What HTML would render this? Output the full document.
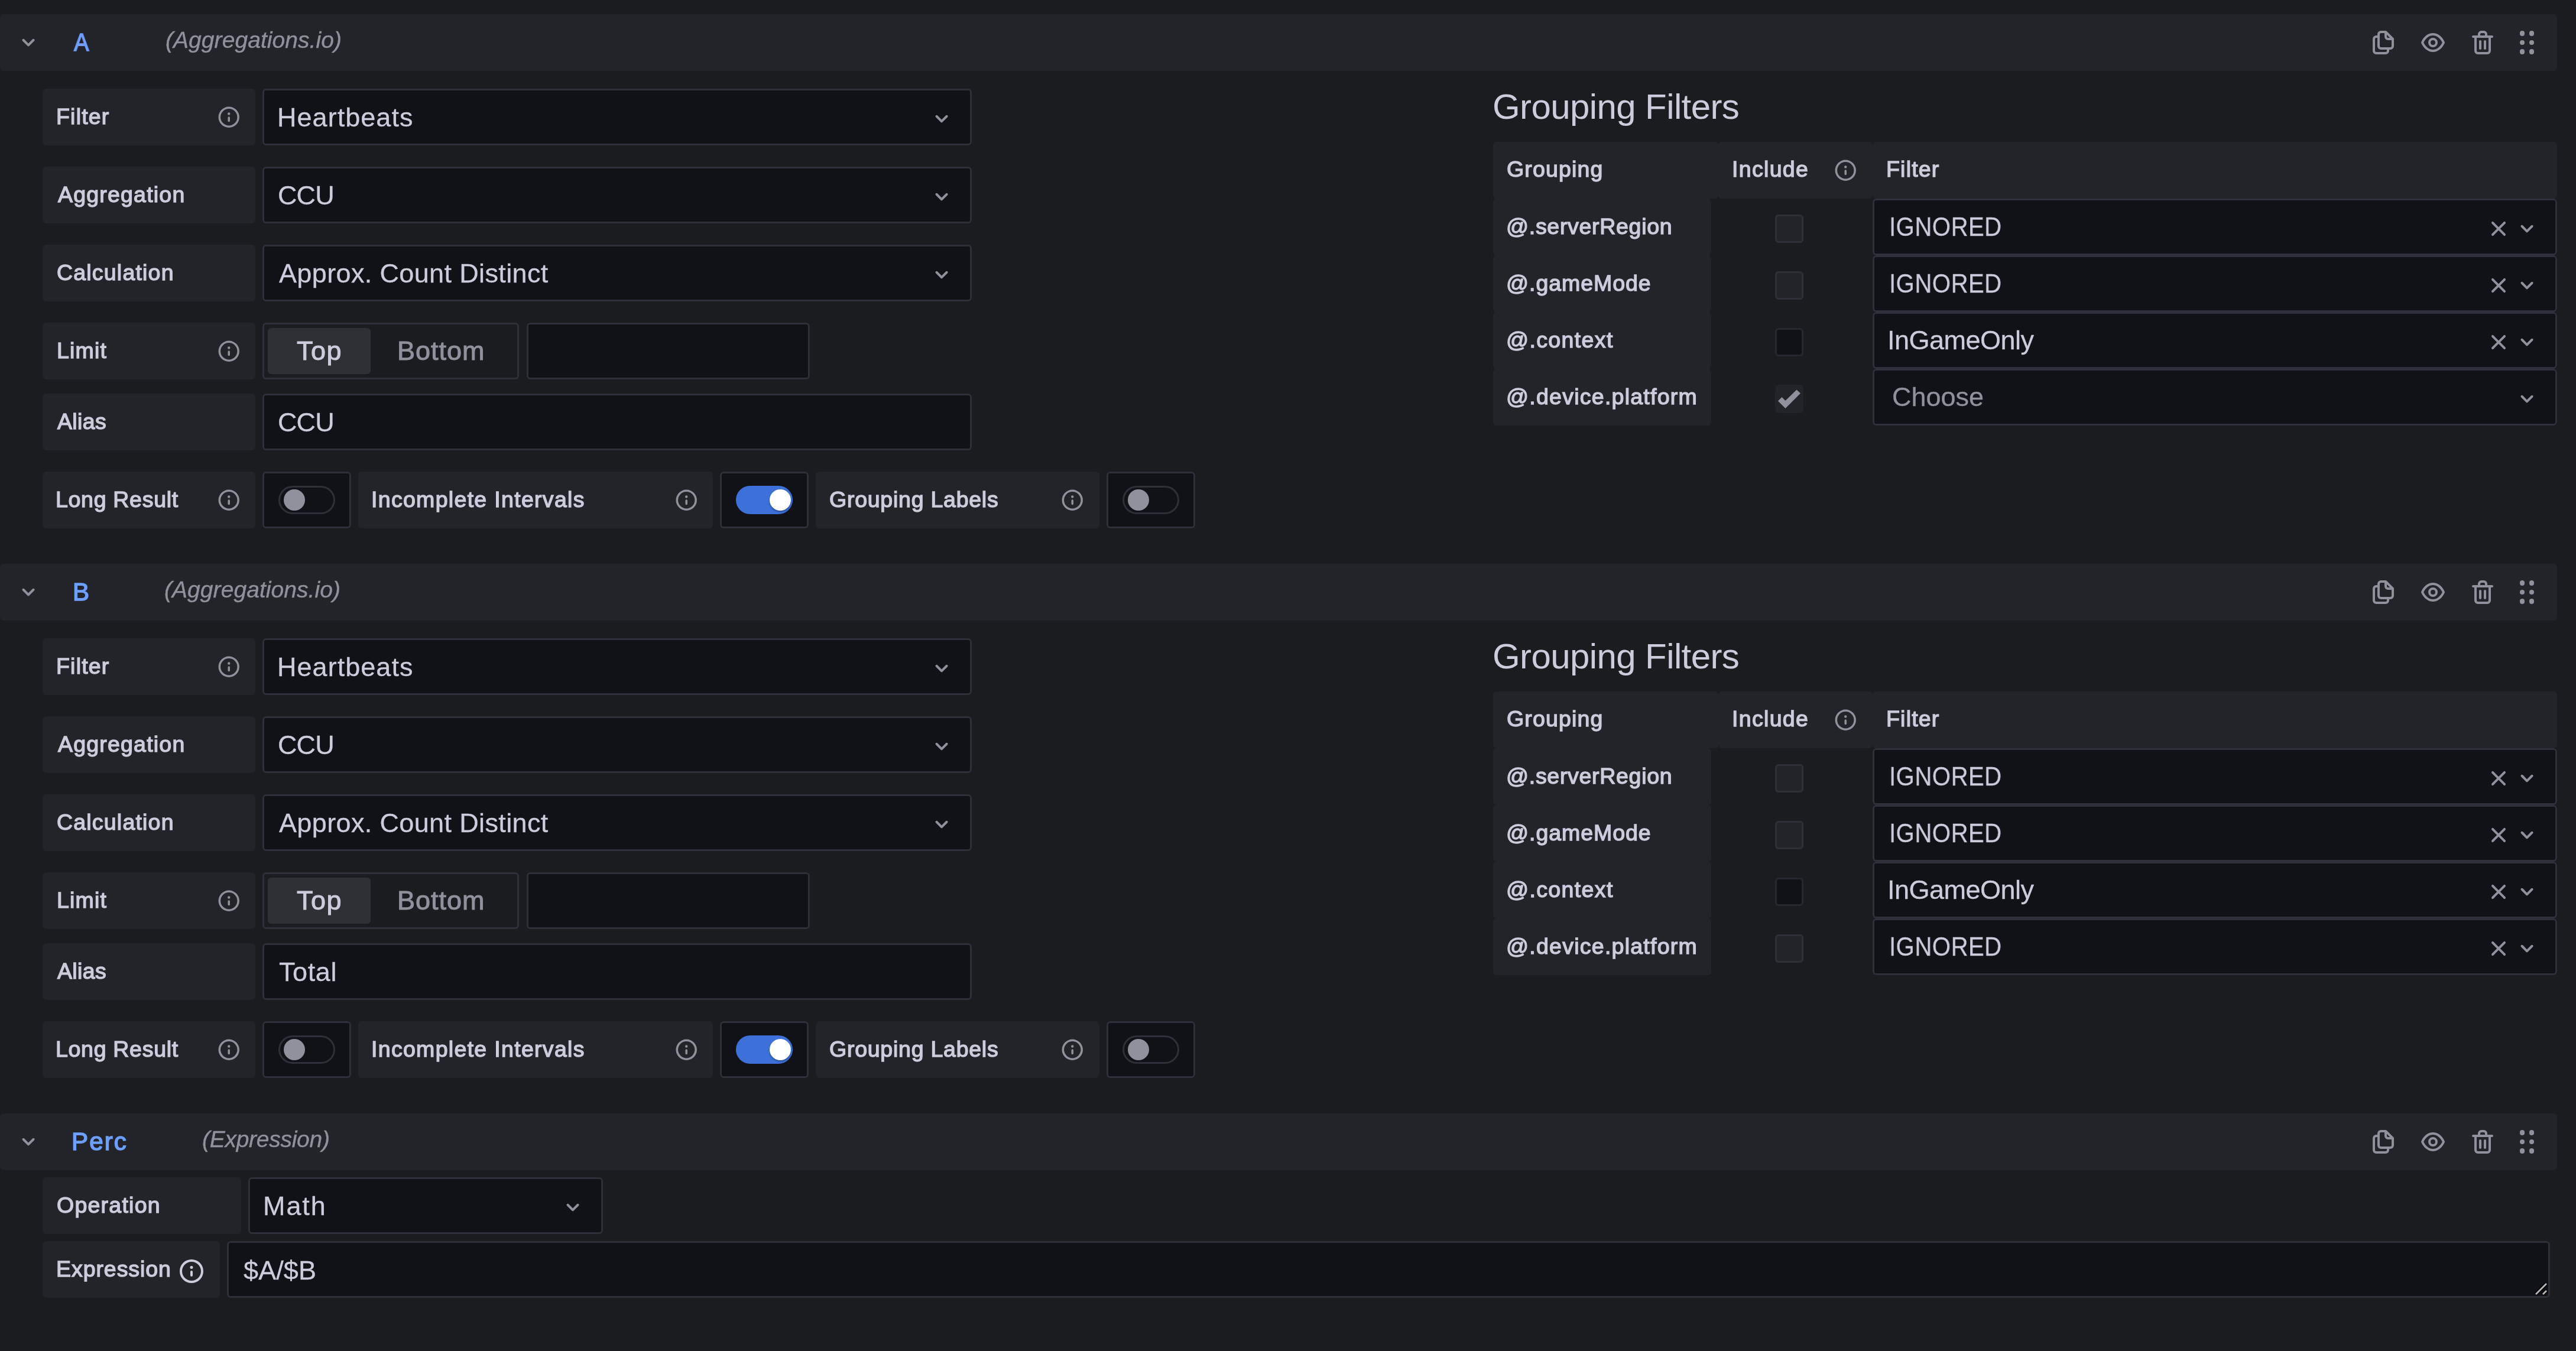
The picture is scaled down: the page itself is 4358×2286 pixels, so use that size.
<!DOCTYPE html>
<html><head><meta charset="utf-8"><title>Query editor</title>
<style>
html,body{margin:0;padding:0;}
body{width:4358px;height:2286px;background:#1b1c20;position:relative;overflow:hidden;font-family:"Liberation Sans",sans-serif;}
.a{position:absolute;}
.t{position:absolute;white-space:nowrap;will-change:transform;}
svg.a{overflow:visible}
</style></head><body>
<div class="a" style="left:0px;top:24px;width:4326px;height:96px;background:#23242a;border-radius:6px;"></div>
<svg class="a" style="left:24.00px;top:47.70px" width="48" height="48" viewBox="0 0 24 24"><path fill="#91919d" d="M17,9.17a1,1,0,0,0-1.41,0L12,12.71,8.46,9.17a1,1,0,0,0-1.41,0,1,1,0,0,0,0,1.42l4.24,4.24a1,1,0,0,0,1.42,0L17,10.59A1,1,0,0,0,17,9.17Z"/></svg>
<div class="t" style="left:124.5px;top:50.95px;font-size:42px;line-height:42px;color:#6e9fff;-webkit-text-stroke:1.5px #6e9fff;transform:scaleX(0.91);transform-origin:0 0;">A</div>
<div class="t" style="left:279.8px;top:47.69px;font-size:39px;line-height:39px;color:#91919d;font-style:italic;letter-spacing:0.06px;-webkit-text-stroke:0.4px #91919d;">(Aggregations.io)</div>
<svg class="a" style="left:4008.00px;top:48.00px" width="48" height="48" viewBox="0 0 24 24"><path fill="#91919d" d="M21,8.94a1.31,1.31,0,0,0-.06-.27l0-.09a1.07,1.07,0,0,0-.19-.28h0l-6-6h0a1.07,1.07,0,0,0-.28-.19.32.32,0,0,0-.09,0A.88.88,0,0,0,14.05,2H10A3,3,0,0,0,7,5V6H6A3,3,0,0,0,3,9V19a3,3,0,0,0,3,3h8a3,3,0,0,0,3-3V18h1a3,3,0,0,0,3-3V9S21,9,21,8.94ZM15,5.41,17.59,8H16a1,1,0,0,1-1-1ZM15,19a1,1,0,0,1-1,1H6a1,1,0,0,1-1-1V9A1,1,0,0,1,6,8H7v7a3,3,0,0,0,3,3h5Zm4-4a1,1,0,0,1-1,1H10a1,1,0,0,1-1-1V5a1,1,0,0,1,1-1h3V7a3,3,0,0,0,3,3h3Z"/></svg>
<svg class="a" style="left:4092.00px;top:48.00px" width="48" height="48" viewBox="0 0 24 24"><path fill="#91919d" d="M21.92,11.6C19.9,6.91,16.1,4,12,4S4.1,6.91,2.08,11.6a1,1,0,0,0,0,.8C4.1,17.09,7.9,20,12,20s7.9-2.91,9.92-7.6A1,1,0,0,0,21.92,11.6ZM12,18c-3.17,0-6.17-2.29-7.9-6C5.830,8.29,8.83,6,12,6s6.17,2.29,7.9,6C18.17,15.71,15.17,18,12,18ZM12,8a4,4,0,1,0,4,4A4,4,0,0,0,12,8Zm0,6a2,2,0,1,1,2-2A2,2,0,0,1,12,14Z"/></svg>
<svg class="a" style="left:4176.00px;top:48.00px" width="48" height="48" viewBox="0 0 24 24"><path fill="#91919d" d="M10,18a1,1,0,0,0,1-1V11a1,1,0,0,0-2,0v6A1,1,0,0,0,10,18ZM20,6H16V5a3,3,0,0,0-3-3H11A3,3,0,0,0,8,5V6H4A1,1,0,0,0,4,8H5V19a3,3,0,0,0,3,3h8a3,3,0,0,0,3-3V8h1a1,1,0,0,0,0-2ZM10,5a1,1,0,0,1,1-1h2a1,1,0,0,1,1,1V6H10Zm7,14a1,1,0,0,1-1,1H8a1,1,0,0,1-1-1V8H17Zm-3-1a1,1,0,0,0,1-1V11a1,1,0,0,0-2,0v6A1,1,0,0,0,14,18Z"/></svg>
<div class="a" style="left:4262.7px;top:52.2px;width:8.6px;height:8.6px;border-radius:50%;background:#91919d"></div>
<div class="a" style="left:4262.7px;top:67.7px;width:8.6px;height:8.6px;border-radius:50%;background:#91919d"></div>
<div class="a" style="left:4262.7px;top:83.2px;width:8.6px;height:8.6px;border-radius:50%;background:#91919d"></div>
<div class="a" style="left:4278.7px;top:52.2px;width:8.6px;height:8.6px;border-radius:50%;background:#91919d"></div>
<div class="a" style="left:4278.7px;top:67.7px;width:8.6px;height:8.6px;border-radius:50%;background:#91919d"></div>
<div class="a" style="left:4278.7px;top:83.2px;width:8.6px;height:8.6px;border-radius:50%;background:#91919d"></div>
<div class="a" style="left:72px;top:150px;width:360px;height:96px;background:#23242a;border-radius:6px;"></div>
<div class="t" style="left:95.4px;top:178.76px;font-size:37.5px;line-height:37.5px;color:#ccccdc;letter-spacing:1.2px;-webkit-text-stroke:1.4px #ccccdc;">Filter</div>
<svg class="a" style="left:365.75px;top:176.75px" width="42.5" height="42.5" viewBox="0 0 24 24"><path fill="#91919d" d="M12,2A10,10,0,1,0,22,12,10,10,0,0,0,12,2Zm0,18a8,8,0,1,1,8-8A8,8,0,0,1,12,20Zm0-8.5a1,1,0,0,0-1,1v3a1,1,0,0,0,2,0v-3A1,1,0,0,0,12,11.5Zm0-4a1.25,1.25,0,1,0,1.25,1.25A1.25,1.25,0,0,0,12,7.5Z"/></svg>
<div class="a" style="left:444px;top:150px;width:1200px;height:96px;background:#111217;box-shadow:inset 0 0 0 3px #2e2f38;border-radius:6px;"></div>
<div class="t" style="left:469px;top:176.21px;font-size:45px;line-height:45px;color:#ccccdc;letter-spacing:1.04px;-webkit-text-stroke:0.3px #ccccdc;">Heartbeats</div>
<svg class="a" style="left:1569.00px;top:176.70px" width="48" height="48" viewBox="0 0 24 24"><path fill="#91919d" d="M17,9.17a1,1,0,0,0-1.41,0L12,12.71,8.46,9.17a1,1,0,0,0-1.41,0,1,1,0,0,0,0,1.42l4.24,4.24a1,1,0,0,0,1.42,0L17,10.59A1,1,0,0,0,17,9.17Z"/></svg>
<div class="a" style="left:72px;top:282px;width:360px;height:96px;background:#23242a;border-radius:6px;"></div>
<div class="t" style="left:97.6px;top:310.76px;font-size:37.5px;line-height:37.5px;color:#ccccdc;letter-spacing:1.2px;-webkit-text-stroke:1.4px #ccccdc;">Aggregation</div>
<div class="a" style="left:444px;top:282px;width:1200px;height:96px;background:#111217;box-shadow:inset 0 0 0 3px #2e2f38;border-radius:6px;"></div>
<div class="t" style="left:470px;top:308.21px;font-size:45px;line-height:45px;color:#ccccdc;letter-spacing:-0.9px;-webkit-text-stroke:0.3px #ccccdc;">CCU</div>
<svg class="a" style="left:1569.00px;top:308.70px" width="48" height="48" viewBox="0 0 24 24"><path fill="#91919d" d="M17,9.17a1,1,0,0,0-1.41,0L12,12.71,8.46,9.17a1,1,0,0,0-1.41,0,1,1,0,0,0,0,1.42l4.24,4.24a1,1,0,0,0,1.42,0L17,10.59A1,1,0,0,0,17,9.17Z"/></svg>
<div class="a" style="left:72px;top:414px;width:360px;height:96px;background:#23242a;border-radius:6px;"></div>
<div class="t" style="left:95.6px;top:442.76px;font-size:37.5px;line-height:37.5px;color:#ccccdc;letter-spacing:1.2px;-webkit-text-stroke:1.4px #ccccdc;">Calculation</div>
<div class="a" style="left:444px;top:414px;width:1200px;height:96px;background:#111217;box-shadow:inset 0 0 0 3px #2e2f38;border-radius:6px;"></div>
<div class="t" style="left:472px;top:440.21px;font-size:45px;line-height:45px;color:#ccccdc;letter-spacing:0.36px;-webkit-text-stroke:0.3px #ccccdc;">Approx. Count Distinct</div>
<svg class="a" style="left:1569.00px;top:440.70px" width="48" height="48" viewBox="0 0 24 24"><path fill="#91919d" d="M17,9.17a1,1,0,0,0-1.41,0L12,12.71,8.46,9.17a1,1,0,0,0-1.41,0,1,1,0,0,0,0,1.42l4.24,4.24a1,1,0,0,0,1.42,0L17,10.59A1,1,0,0,0,17,9.17Z"/></svg>
<div class="a" style="left:72px;top:546px;width:360px;height:96px;background:#23242a;border-radius:6px;"></div>
<div class="t" style="left:95.6px;top:574.76px;font-size:37.5px;line-height:37.5px;color:#ccccdc;letter-spacing:1.2px;-webkit-text-stroke:1.4px #ccccdc;">Limit</div>
<svg class="a" style="left:365.75px;top:572.75px" width="42.5" height="42.5" viewBox="0 0 24 24"><path fill="#91919d" d="M12,2A10,10,0,1,0,22,12,10,10,0,0,0,12,2Zm0,18a8,8,0,1,1,8-8A8,8,0,0,1,12,20Zm0-8.5a1,1,0,0,0-1,1v3a1,1,0,0,0,2,0v-3A1,1,0,0,0,12,11.5Zm0-4a1.25,1.25,0,1,0,1.25,1.25A1.25,1.25,0,0,0,12,7.5Z"/></svg>
<div class="a" style="left:444px;top:546px;width:434px;height:96px;box-shadow:inset 0 0 0 3px #2e2f38;border-radius:6px;"></div>
<div class="a" style="left:453px;top:555px;width:174px;height:78px;background:#2f3036;border-radius:6px;"></div>
<div class="t" style="left:502px;top:571.11px;font-size:45px;line-height:45px;color:#ccccdc;letter-spacing:1.5px;-webkit-text-stroke:1.0px #ccccdc;">Top</div>
<div class="t" style="left:672.2px;top:571.11px;font-size:45px;line-height:45px;color:#91919d;letter-spacing:1.0px;-webkit-text-stroke:1.0px #91919d;">Bottom</div>
<div class="a" style="left:891px;top:546px;width:479px;height:96px;background:#111217;box-shadow:inset 0 0 0 3px #2e2f38;border-radius:6px;"></div>
<div class="a" style="left:72px;top:666px;width:360px;height:96px;background:#23242a;border-radius:6px;"></div>
<div class="t" style="left:97.4px;top:694.76px;font-size:37.5px;line-height:37.5px;color:#ccccdc;letter-spacing:0.34px;-webkit-text-stroke:1.4px #ccccdc;">Alias</div>
<div class="a" style="left:444px;top:666px;width:1200px;height:96px;background:#111217;box-shadow:inset 0 0 0 3px #2e2f38;border-radius:6px;"></div>
<div class="t" style="left:470px;top:692.21px;font-size:45px;line-height:45px;color:#ccccdc;letter-spacing:-0.9px;-webkit-text-stroke:0.3px #ccccdc;">CCU</div>
<div class="a" style="left:72px;top:798px;width:360px;height:96px;background:#23242a;border-radius:6px;"></div>
<div class="t" style="left:94.0px;top:826.76px;font-size:37.5px;line-height:37.5px;color:#ccccdc;letter-spacing:0.7px;-webkit-text-stroke:1.4px #ccccdc;">Long Result</div>
<svg class="a" style="left:365.75px;top:824.75px" width="42.5" height="42.5" viewBox="0 0 24 24"><path fill="#91919d" d="M12,2A10,10,0,1,0,22,12,10,10,0,0,0,12,2Zm0,18a8,8,0,1,1,8-8A8,8,0,0,1,12,20Zm0-8.5a1,1,0,0,0-1,1v3a1,1,0,0,0,2,0v-3A1,1,0,0,0,12,11.5Zm0-4a1.25,1.25,0,1,0,1.25,1.25A1.25,1.25,0,0,0,12,7.5Z"/></svg>
<div class="a" style="left:444px;top:798px;width:150px;height:96px;background:#111217;box-shadow:inset 0 0 0 3px #2e2f38;border-radius:6px;"></div>
<div class="a" style="left:471px;top:822px;width:96px;height:48px;border-radius:24px;box-shadow:inset 0 0 0 3px #2e2f38"></div>
<div class="a" style="left:480px;top:828px;width:36px;height:36px;border-radius:50%;background:#91919d"></div>
<div class="a" style="left:606px;top:798px;width:600px;height:96px;background:#23242a;border-radius:6px;"></div>
<div class="t" style="left:627.6px;top:826.76px;font-size:37.5px;line-height:37.5px;color:#ccccdc;letter-spacing:1.31px;-webkit-text-stroke:1.4px #ccccdc;">Incomplete Intervals</div>
<svg class="a" style="left:1139.75px;top:824.75px" width="42.5" height="42.5" viewBox="0 0 24 24"><path fill="#91919d" d="M12,2A10,10,0,1,0,22,12,10,10,0,0,0,12,2Zm0,18a8,8,0,1,1,8-8A8,8,0,0,1,12,20Zm0-8.5a1,1,0,0,0-1,1v3a1,1,0,0,0,2,0v-3A1,1,0,0,0,12,11.5Zm0-4a1.25,1.25,0,1,0,1.25,1.25A1.25,1.25,0,0,0,12,7.5Z"/></svg>
<div class="a" style="left:1218px;top:798px;width:150px;height:96px;background:#111217;box-shadow:inset 0 0 0 3px #2e2f38;border-radius:6px;"></div>
<div class="a" style="left:1245px;top:822px;width:96px;height:48px;border-radius:24px;background:#3d71d9"></div>
<div class="a" style="left:1302px;top:828px;width:36px;height:36px;border-radius:50%;background:#fff;box-shadow:0 2px 3px rgba(0,0,0,0.35)"></div>
<div class="a" style="left:1380px;top:798px;width:480px;height:96px;background:#23242a;border-radius:6px;"></div>
<div class="t" style="left:1403.4px;top:826.76px;font-size:37.5px;line-height:37.5px;color:#ccccdc;letter-spacing:0.75px;-webkit-text-stroke:1.4px #ccccdc;">Grouping Labels</div>
<svg class="a" style="left:1793.25px;top:824.75px" width="42.5" height="42.5" viewBox="0 0 24 24"><path fill="#91919d" d="M12,2A10,10,0,1,0,22,12,10,10,0,0,0,12,2Zm0,18a8,8,0,1,1,8-8A8,8,0,0,1,12,20Zm0-8.5a1,1,0,0,0-1,1v3a1,1,0,0,0,2,0v-3A1,1,0,0,0,12,11.5Zm0-4a1.25,1.25,0,1,0,1.25,1.25A1.25,1.25,0,0,0,12,7.5Z"/></svg>
<div class="a" style="left:1872px;top:798px;width:150px;height:96px;background:#111217;box-shadow:inset 0 0 0 3px #2e2f38;border-radius:6px;"></div>
<div class="a" style="left:1899px;top:822px;width:96px;height:48px;border-radius:24px;box-shadow:inset 0 0 0 3px #2e2f38"></div>
<div class="a" style="left:1908px;top:828px;width:36px;height:36px;border-radius:50%;background:#91919d"></div>
<div class="t" style="left:2524.6px;top:151.21px;font-size:60px;line-height:60px;color:#ccccdc;letter-spacing:-0.6px;">Grouping Filters</div>
<div class="a" style="left:2526px;top:240px;width:381px;height:96px;background:#23242a;border-radius:6px;"></div>
<div class="a" style="left:2907px;top:240px;width:261px;height:96px;background:#23242a;border-radius:6px;"></div>
<div class="a" style="left:3168px;top:240px;width:1158px;height:96px;background:#23242a;border-radius:6px;"></div>
<div class="t" style="left:2549.2px;top:268.26px;font-size:37.5px;line-height:37.5px;color:#ccccdc;letter-spacing:1.17px;-webkit-text-stroke:1.4px #ccccdc;">Grouping</div>
<div class="t" style="left:2930.2px;top:268.26px;font-size:37.5px;line-height:37.5px;color:#ccccdc;letter-spacing:1.32px;-webkit-text-stroke:1.4px #ccccdc;">Include</div>
<svg class="a" style="left:3101.45px;top:266.75px" width="42.5" height="42.5" viewBox="0 0 24 24"><path fill="#91919d" d="M12,2A10,10,0,1,0,22,12,10,10,0,0,0,12,2Zm0,18a8,8,0,1,1,8-8A8,8,0,0,1,12,20Zm0-8.5a1,1,0,0,0-1,1v3a1,1,0,0,0,2,0v-3A1,1,0,0,0,12,11.5Zm0-4a1.25,1.25,0,1,0,1.25,1.25A1.25,1.25,0,0,0,12,7.5Z"/></svg>
<div class="t" style="left:3191.4px;top:268.26px;font-size:37.5px;line-height:37.5px;color:#ccccdc;letter-spacing:1.2px;-webkit-text-stroke:1.4px #ccccdc;">Filter</div>
<div class="a" style="left:2526px;top:336px;width:369px;height:96px;background:#23242a;border-radius:6px;"></div>
<div class="t" style="left:2548.2px;top:364.76px;font-size:37.5px;line-height:37.5px;color:#ccccdc;letter-spacing:0.7px;-webkit-text-stroke:1.4px #ccccdc;">@.serverRegion</div>
<div class="a" style="left:3003px;top:363px;width:48px;height:48px;background:#23242a;box-shadow:inset 0 0 0 3px #2e2f38;border-radius:6px;"></div>
<div class="a" style="left:3168px;top:336px;width:1158px;height:96px;background:#111217;box-shadow:inset 0 0 0 3px #2e2f38;border-radius:6px;"></div>
<div class="t" style="left:3195.5px;top:361.41px;font-size:45px;line-height:45px;color:#ccccdc;letter-spacing:0.6px;-webkit-text-stroke:0.3px #ccccdc;transform:scaleX(0.89);transform-origin:0 0;">IGNORED</div>
<svg class="a" style="left:4251.00px;top:362.70px" width="48" height="48" viewBox="0 0 24 24"><path fill="#91919d" d="M17,9.17a1,1,0,0,0-1.41,0L12,12.71,8.46,9.17a1,1,0,0,0-1.41,0,1,1,0,0,0,0,1.42l4.24,4.24a1,1,0,0,0,1.42,0L17,10.59A1,1,0,0,0,17,9.17Z"/></svg>
<svg class="a" style="left:4203.00px;top:363.00px" width="48" height="48" viewBox="0 0 24 24"><path fill="#91919d" d="M13.41,12l4.3-4.29a1,1,0,1,0-1.42-1.42L12,10.59,7.71,6.29A1,1,0,0,0,6.29,7.71L10.59,12l-4.3,4.29a1,1,0,0,0,0,1.42,1,1,0,0,0,1.42,0L12,13.41l4.29,4.3a1,1,0,0,0,1.42,0,1,1,0,0,0,0-1.42Z"/></svg>
<div class="a" style="left:2526px;top:432px;width:369px;height:96px;background:#23242a;border-radius:6px;"></div>
<div class="t" style="left:2548.2px;top:460.76px;font-size:37.5px;line-height:37.5px;color:#ccccdc;letter-spacing:0.95px;-webkit-text-stroke:1.4px #ccccdc;">@.gameMode</div>
<div class="a" style="left:3003px;top:459px;width:48px;height:48px;background:#23242a;box-shadow:inset 0 0 0 3px #2e2f38;border-radius:6px;"></div>
<div class="a" style="left:3168px;top:432px;width:1158px;height:96px;background:#111217;box-shadow:inset 0 0 0 3px #2e2f38;border-radius:6px;"></div>
<div class="t" style="left:3195.5px;top:457.41px;font-size:45px;line-height:45px;color:#ccccdc;letter-spacing:0.6px;-webkit-text-stroke:0.3px #ccccdc;transform:scaleX(0.89);transform-origin:0 0;">IGNORED</div>
<svg class="a" style="left:4251.00px;top:458.70px" width="48" height="48" viewBox="0 0 24 24"><path fill="#91919d" d="M17,9.17a1,1,0,0,0-1.41,0L12,12.71,8.46,9.17a1,1,0,0,0-1.41,0,1,1,0,0,0,0,1.42l4.24,4.24a1,1,0,0,0,1.42,0L17,10.59A1,1,0,0,0,17,9.17Z"/></svg>
<svg class="a" style="left:4203.00px;top:459.00px" width="48" height="48" viewBox="0 0 24 24"><path fill="#91919d" d="M13.41,12l4.3-4.29a1,1,0,1,0-1.42-1.42L12,10.59,7.71,6.29A1,1,0,0,0,6.29,7.71L10.59,12l-4.3,4.29a1,1,0,0,0,0,1.42,1,1,0,0,0,1.42,0L12,13.41l4.29,4.3a1,1,0,0,0,1.42,0,1,1,0,0,0,0-1.42Z"/></svg>
<div class="a" style="left:2526px;top:528px;width:369px;height:96px;background:#23242a;border-radius:6px;"></div>
<div class="t" style="left:2548.2px;top:556.76px;font-size:37.5px;line-height:37.5px;color:#ccccdc;letter-spacing:1.37px;-webkit-text-stroke:1.4px #ccccdc;">@.context</div>
<div class="a" style="left:3003px;top:555px;width:48px;height:48px;background:#111217;box-shadow:inset 0 0 0 3px rgba(204,204,220,0.12);border-radius:6px;"></div>
<div class="a" style="left:3168px;top:528px;width:1158px;height:96px;background:#111217;box-shadow:inset 0 0 0 3px #2e2f38;border-radius:6px;"></div>
<div class="t" style="left:3193px;top:553.41px;font-size:45px;line-height:45px;color:#ccccdc;letter-spacing:-0.51px;-webkit-text-stroke:0.3px #ccccdc;">InGameOnly</div>
<svg class="a" style="left:4251.00px;top:554.70px" width="48" height="48" viewBox="0 0 24 24"><path fill="#91919d" d="M17,9.17a1,1,0,0,0-1.41,0L12,12.71,8.46,9.17a1,1,0,0,0-1.41,0,1,1,0,0,0,0,1.42l4.24,4.24a1,1,0,0,0,1.42,0L17,10.59A1,1,0,0,0,17,9.17Z"/></svg>
<svg class="a" style="left:4203.00px;top:555.00px" width="48" height="48" viewBox="0 0 24 24"><path fill="#91919d" d="M13.41,12l4.3-4.29a1,1,0,1,0-1.42-1.42L12,10.59,7.71,6.29A1,1,0,0,0,6.29,7.71L10.59,12l-4.3,4.29a1,1,0,0,0,0,1.42,1,1,0,0,0,1.42,0L12,13.41l4.29,4.3a1,1,0,0,0,1.42,0,1,1,0,0,0,0-1.42Z"/></svg>
<div class="a" style="left:2526px;top:624px;width:369px;height:96px;background:#23242a;border-radius:6px;"></div>
<div class="t" style="left:2548.2px;top:652.76px;font-size:37.5px;line-height:37.5px;color:#ccccdc;letter-spacing:1.25px;-webkit-text-stroke:1.4px #ccccdc;">@.device.platform</div>
<div class="a" style="left:3003px;top:651px;width:48px;height:48px;background:#23242a;border-radius:6px;"></div>
<svg class="a" style="left:3003px;top:651px" width="48" height="48" viewBox="0 0 48 48"><path d="M5 27.5 L11.5 21 L17.5 27 L36.5 8.5 L43 14.5 L17.5 40 Z" fill="#91919d"/></svg>
<div class="a" style="left:3168px;top:624px;width:1158px;height:96px;background:#111217;box-shadow:inset 0 0 0 3px #2e2f38;border-radius:6px;"></div>
<div class="t" style="left:3201.4px;top:649.41px;font-size:45px;line-height:45px;color:#91919d;-webkit-text-stroke:0.3px #91919d;">Choose</div>
<svg class="a" style="left:4251.00px;top:650.70px" width="48" height="48" viewBox="0 0 24 24"><path fill="#91919d" d="M17,9.17a1,1,0,0,0-1.41,0L12,12.71,8.46,9.17a1,1,0,0,0-1.41,0,1,1,0,0,0,0,1.42l4.24,4.24a1,1,0,0,0,1.42,0L17,10.59A1,1,0,0,0,17,9.17Z"/></svg>
<div class="a" style="left:0px;top:954px;width:4326px;height:96px;background:#23242a;border-radius:6px;"></div>
<svg class="a" style="left:24.00px;top:977.70px" width="48" height="48" viewBox="0 0 24 24"><path fill="#91919d" d="M17,9.17a1,1,0,0,0-1.41,0L12,12.71,8.46,9.17a1,1,0,0,0-1.41,0,1,1,0,0,0,0,1.42l4.24,4.24a1,1,0,0,0,1.42,0L17,10.59A1,1,0,0,0,17,9.17Z"/></svg>
<div class="t" style="left:122.5px;top:980.95px;font-size:42px;line-height:42px;color:#6e9fff;-webkit-text-stroke:1.5px #6e9fff;">B</div>
<div class="t" style="left:277.8px;top:977.69px;font-size:39px;line-height:39px;color:#91919d;font-style:italic;letter-spacing:0.06px;-webkit-text-stroke:0.4px #91919d;">(Aggregations.io)</div>
<svg class="a" style="left:4008.00px;top:978.00px" width="48" height="48" viewBox="0 0 24 24"><path fill="#91919d" d="M21,8.94a1.31,1.31,0,0,0-.06-.27l0-.09a1.07,1.07,0,0,0-.19-.28h0l-6-6h0a1.07,1.07,0,0,0-.28-.19.32.32,0,0,0-.09,0A.88.88,0,0,0,14.05,2H10A3,3,0,0,0,7,5V6H6A3,3,0,0,0,3,9V19a3,3,0,0,0,3,3h8a3,3,0,0,0,3-3V18h1a3,3,0,0,0,3-3V9S21,9,21,8.94ZM15,5.41,17.59,8H16a1,1,0,0,1-1-1ZM15,19a1,1,0,0,1-1,1H6a1,1,0,0,1-1-1V9A1,1,0,0,1,6,8H7v7a3,3,0,0,0,3,3h5Zm4-4a1,1,0,0,1-1,1H10a1,1,0,0,1-1-1V5a1,1,0,0,1,1-1h3V7a3,3,0,0,0,3,3h3Z"/></svg>
<svg class="a" style="left:4092.00px;top:978.00px" width="48" height="48" viewBox="0 0 24 24"><path fill="#91919d" d="M21.92,11.6C19.9,6.91,16.1,4,12,4S4.1,6.91,2.08,11.6a1,1,0,0,0,0,.8C4.1,17.09,7.9,20,12,20s7.9-2.91,9.92-7.6A1,1,0,0,0,21.92,11.6ZM12,18c-3.17,0-6.17-2.29-7.9-6C5.830,8.29,8.83,6,12,6s6.17,2.29,7.9,6C18.17,15.71,15.17,18,12,18ZM12,8a4,4,0,1,0,4,4A4,4,0,0,0,12,8Zm0,6a2,2,0,1,1,2-2A2,2,0,0,1,12,14Z"/></svg>
<svg class="a" style="left:4176.00px;top:978.00px" width="48" height="48" viewBox="0 0 24 24"><path fill="#91919d" d="M10,18a1,1,0,0,0,1-1V11a1,1,0,0,0-2,0v6A1,1,0,0,0,10,18ZM20,6H16V5a3,3,0,0,0-3-3H11A3,3,0,0,0,8,5V6H4A1,1,0,0,0,4,8H5V19a3,3,0,0,0,3,3h8a3,3,0,0,0,3-3V8h1a1,1,0,0,0,0-2ZM10,5a1,1,0,0,1,1-1h2a1,1,0,0,1,1,1V6H10Zm7,14a1,1,0,0,1-1,1H8a1,1,0,0,1-1-1V8H17Zm-3-1a1,1,0,0,0,1-1V11a1,1,0,0,0-2,0v6A1,1,0,0,0,14,18Z"/></svg>
<div class="a" style="left:4262.7px;top:982.2px;width:8.6px;height:8.6px;border-radius:50%;background:#91919d"></div>
<div class="a" style="left:4262.7px;top:997.7px;width:8.6px;height:8.6px;border-radius:50%;background:#91919d"></div>
<div class="a" style="left:4262.7px;top:1013.2px;width:8.6px;height:8.6px;border-radius:50%;background:#91919d"></div>
<div class="a" style="left:4278.7px;top:982.2px;width:8.6px;height:8.6px;border-radius:50%;background:#91919d"></div>
<div class="a" style="left:4278.7px;top:997.7px;width:8.6px;height:8.6px;border-radius:50%;background:#91919d"></div>
<div class="a" style="left:4278.7px;top:1013.2px;width:8.6px;height:8.6px;border-radius:50%;background:#91919d"></div>
<div class="a" style="left:72px;top:1080px;width:360px;height:96px;background:#23242a;border-radius:6px;"></div>
<div class="t" style="left:95.4px;top:1108.76px;font-size:37.5px;line-height:37.5px;color:#ccccdc;letter-spacing:1.2px;-webkit-text-stroke:1.4px #ccccdc;">Filter</div>
<svg class="a" style="left:365.75px;top:1106.75px" width="42.5" height="42.5" viewBox="0 0 24 24"><path fill="#91919d" d="M12,2A10,10,0,1,0,22,12,10,10,0,0,0,12,2Zm0,18a8,8,0,1,1,8-8A8,8,0,0,1,12,20Zm0-8.5a1,1,0,0,0-1,1v3a1,1,0,0,0,2,0v-3A1,1,0,0,0,12,11.5Zm0-4a1.25,1.25,0,1,0,1.25,1.25A1.25,1.25,0,0,0,12,7.5Z"/></svg>
<div class="a" style="left:444px;top:1080px;width:1200px;height:96px;background:#111217;box-shadow:inset 0 0 0 3px #2e2f38;border-radius:6px;"></div>
<div class="t" style="left:469px;top:1106.21px;font-size:45px;line-height:45px;color:#ccccdc;letter-spacing:1.04px;-webkit-text-stroke:0.3px #ccccdc;">Heartbeats</div>
<svg class="a" style="left:1569.00px;top:1106.70px" width="48" height="48" viewBox="0 0 24 24"><path fill="#91919d" d="M17,9.17a1,1,0,0,0-1.41,0L12,12.71,8.46,9.17a1,1,0,0,0-1.41,0,1,1,0,0,0,0,1.42l4.24,4.24a1,1,0,0,0,1.42,0L17,10.59A1,1,0,0,0,17,9.17Z"/></svg>
<div class="a" style="left:72px;top:1212px;width:360px;height:96px;background:#23242a;border-radius:6px;"></div>
<div class="t" style="left:97.6px;top:1240.76px;font-size:37.5px;line-height:37.5px;color:#ccccdc;letter-spacing:1.2px;-webkit-text-stroke:1.4px #ccccdc;">Aggregation</div>
<div class="a" style="left:444px;top:1212px;width:1200px;height:96px;background:#111217;box-shadow:inset 0 0 0 3px #2e2f38;border-radius:6px;"></div>
<div class="t" style="left:470px;top:1238.21px;font-size:45px;line-height:45px;color:#ccccdc;letter-spacing:-0.9px;-webkit-text-stroke:0.3px #ccccdc;">CCU</div>
<svg class="a" style="left:1569.00px;top:1238.70px" width="48" height="48" viewBox="0 0 24 24"><path fill="#91919d" d="M17,9.17a1,1,0,0,0-1.41,0L12,12.71,8.46,9.17a1,1,0,0,0-1.41,0,1,1,0,0,0,0,1.42l4.24,4.24a1,1,0,0,0,1.42,0L17,10.59A1,1,0,0,0,17,9.17Z"/></svg>
<div class="a" style="left:72px;top:1344px;width:360px;height:96px;background:#23242a;border-radius:6px;"></div>
<div class="t" style="left:95.6px;top:1372.76px;font-size:37.5px;line-height:37.5px;color:#ccccdc;letter-spacing:1.2px;-webkit-text-stroke:1.4px #ccccdc;">Calculation</div>
<div class="a" style="left:444px;top:1344px;width:1200px;height:96px;background:#111217;box-shadow:inset 0 0 0 3px #2e2f38;border-radius:6px;"></div>
<div class="t" style="left:472px;top:1370.21px;font-size:45px;line-height:45px;color:#ccccdc;letter-spacing:0.36px;-webkit-text-stroke:0.3px #ccccdc;">Approx. Count Distinct</div>
<svg class="a" style="left:1569.00px;top:1370.70px" width="48" height="48" viewBox="0 0 24 24"><path fill="#91919d" d="M17,9.17a1,1,0,0,0-1.41,0L12,12.71,8.46,9.17a1,1,0,0,0-1.41,0,1,1,0,0,0,0,1.42l4.24,4.24a1,1,0,0,0,1.42,0L17,10.59A1,1,0,0,0,17,9.17Z"/></svg>
<div class="a" style="left:72px;top:1476px;width:360px;height:96px;background:#23242a;border-radius:6px;"></div>
<div class="t" style="left:95.6px;top:1504.76px;font-size:37.5px;line-height:37.5px;color:#ccccdc;letter-spacing:1.2px;-webkit-text-stroke:1.4px #ccccdc;">Limit</div>
<svg class="a" style="left:365.75px;top:1502.75px" width="42.5" height="42.5" viewBox="0 0 24 24"><path fill="#91919d" d="M12,2A10,10,0,1,0,22,12,10,10,0,0,0,12,2Zm0,18a8,8,0,1,1,8-8A8,8,0,0,1,12,20Zm0-8.5a1,1,0,0,0-1,1v3a1,1,0,0,0,2,0v-3A1,1,0,0,0,12,11.5Zm0-4a1.25,1.25,0,1,0,1.25,1.25A1.25,1.25,0,0,0,12,7.5Z"/></svg>
<div class="a" style="left:444px;top:1476px;width:434px;height:96px;box-shadow:inset 0 0 0 3px #2e2f38;border-radius:6px;"></div>
<div class="a" style="left:453px;top:1485px;width:174px;height:78px;background:#2f3036;border-radius:6px;"></div>
<div class="t" style="left:502px;top:1501.11px;font-size:45px;line-height:45px;color:#ccccdc;letter-spacing:1.5px;-webkit-text-stroke:1.0px #ccccdc;">Top</div>
<div class="t" style="left:672.2px;top:1501.11px;font-size:45px;line-height:45px;color:#91919d;letter-spacing:1.0px;-webkit-text-stroke:1.0px #91919d;">Bottom</div>
<div class="a" style="left:891px;top:1476px;width:479px;height:96px;background:#111217;box-shadow:inset 0 0 0 3px #2e2f38;border-radius:6px;"></div>
<div class="a" style="left:72px;top:1596px;width:360px;height:96px;background:#23242a;border-radius:6px;"></div>
<div class="t" style="left:97.4px;top:1624.76px;font-size:37.5px;line-height:37.5px;color:#ccccdc;letter-spacing:0.34px;-webkit-text-stroke:1.4px #ccccdc;">Alias</div>
<div class="a" style="left:444px;top:1596px;width:1200px;height:96px;background:#111217;box-shadow:inset 0 0 0 3px #2e2f38;border-radius:6px;"></div>
<div class="t" style="left:471.8px;top:1622.21px;font-size:45px;line-height:45px;color:#ccccdc;letter-spacing:0.6px;-webkit-text-stroke:0.3px #ccccdc;">Total</div>
<div class="a" style="left:72px;top:1728px;width:360px;height:96px;background:#23242a;border-radius:6px;"></div>
<div class="t" style="left:94.0px;top:1756.76px;font-size:37.5px;line-height:37.5px;color:#ccccdc;letter-spacing:0.7px;-webkit-text-stroke:1.4px #ccccdc;">Long Result</div>
<svg class="a" style="left:365.75px;top:1754.75px" width="42.5" height="42.5" viewBox="0 0 24 24"><path fill="#91919d" d="M12,2A10,10,0,1,0,22,12,10,10,0,0,0,12,2Zm0,18a8,8,0,1,1,8-8A8,8,0,0,1,12,20Zm0-8.5a1,1,0,0,0-1,1v3a1,1,0,0,0,2,0v-3A1,1,0,0,0,12,11.5Zm0-4a1.25,1.25,0,1,0,1.25,1.25A1.25,1.25,0,0,0,12,7.5Z"/></svg>
<div class="a" style="left:444px;top:1728px;width:150px;height:96px;background:#111217;box-shadow:inset 0 0 0 3px #2e2f38;border-radius:6px;"></div>
<div class="a" style="left:471px;top:1752px;width:96px;height:48px;border-radius:24px;box-shadow:inset 0 0 0 3px #2e2f38"></div>
<div class="a" style="left:480px;top:1758px;width:36px;height:36px;border-radius:50%;background:#91919d"></div>
<div class="a" style="left:606px;top:1728px;width:600px;height:96px;background:#23242a;border-radius:6px;"></div>
<div class="t" style="left:627.6px;top:1756.76px;font-size:37.5px;line-height:37.5px;color:#ccccdc;letter-spacing:1.31px;-webkit-text-stroke:1.4px #ccccdc;">Incomplete Intervals</div>
<svg class="a" style="left:1139.75px;top:1754.75px" width="42.5" height="42.5" viewBox="0 0 24 24"><path fill="#91919d" d="M12,2A10,10,0,1,0,22,12,10,10,0,0,0,12,2Zm0,18a8,8,0,1,1,8-8A8,8,0,0,1,12,20Zm0-8.5a1,1,0,0,0-1,1v3a1,1,0,0,0,2,0v-3A1,1,0,0,0,12,11.5Zm0-4a1.25,1.25,0,1,0,1.25,1.25A1.25,1.25,0,0,0,12,7.5Z"/></svg>
<div class="a" style="left:1218px;top:1728px;width:150px;height:96px;background:#111217;box-shadow:inset 0 0 0 3px #2e2f38;border-radius:6px;"></div>
<div class="a" style="left:1245px;top:1752px;width:96px;height:48px;border-radius:24px;background:#3d71d9"></div>
<div class="a" style="left:1302px;top:1758px;width:36px;height:36px;border-radius:50%;background:#fff;box-shadow:0 2px 3px rgba(0,0,0,0.35)"></div>
<div class="a" style="left:1380px;top:1728px;width:480px;height:96px;background:#23242a;border-radius:6px;"></div>
<div class="t" style="left:1403.4px;top:1756.76px;font-size:37.5px;line-height:37.5px;color:#ccccdc;letter-spacing:0.75px;-webkit-text-stroke:1.4px #ccccdc;">Grouping Labels</div>
<svg class="a" style="left:1793.25px;top:1754.75px" width="42.5" height="42.5" viewBox="0 0 24 24"><path fill="#91919d" d="M12,2A10,10,0,1,0,22,12,10,10,0,0,0,12,2Zm0,18a8,8,0,1,1,8-8A8,8,0,0,1,12,20Zm0-8.5a1,1,0,0,0-1,1v3a1,1,0,0,0,2,0v-3A1,1,0,0,0,12,11.5Zm0-4a1.25,1.25,0,1,0,1.25,1.25A1.25,1.25,0,0,0,12,7.5Z"/></svg>
<div class="a" style="left:1872px;top:1728px;width:150px;height:96px;background:#111217;box-shadow:inset 0 0 0 3px #2e2f38;border-radius:6px;"></div>
<div class="a" style="left:1899px;top:1752px;width:96px;height:48px;border-radius:24px;box-shadow:inset 0 0 0 3px #2e2f38"></div>
<div class="a" style="left:1908px;top:1758px;width:36px;height:36px;border-radius:50%;background:#91919d"></div>
<div class="t" style="left:2524.6px;top:1081.21px;font-size:60px;line-height:60px;color:#ccccdc;letter-spacing:-0.6px;">Grouping Filters</div>
<div class="a" style="left:2526px;top:1170px;width:381px;height:96px;background:#23242a;border-radius:6px;"></div>
<div class="a" style="left:2907px;top:1170px;width:261px;height:96px;background:#23242a;border-radius:6px;"></div>
<div class="a" style="left:3168px;top:1170px;width:1158px;height:96px;background:#23242a;border-radius:6px;"></div>
<div class="t" style="left:2549.2px;top:1198.26px;font-size:37.5px;line-height:37.5px;color:#ccccdc;letter-spacing:1.17px;-webkit-text-stroke:1.4px #ccccdc;">Grouping</div>
<div class="t" style="left:2930.2px;top:1198.26px;font-size:37.5px;line-height:37.5px;color:#ccccdc;letter-spacing:1.32px;-webkit-text-stroke:1.4px #ccccdc;">Include</div>
<svg class="a" style="left:3101.45px;top:1196.75px" width="42.5" height="42.5" viewBox="0 0 24 24"><path fill="#91919d" d="M12,2A10,10,0,1,0,22,12,10,10,0,0,0,12,2Zm0,18a8,8,0,1,1,8-8A8,8,0,0,1,12,20Zm0-8.5a1,1,0,0,0-1,1v3a1,1,0,0,0,2,0v-3A1,1,0,0,0,12,11.5Zm0-4a1.25,1.25,0,1,0,1.25,1.25A1.25,1.25,0,0,0,12,7.5Z"/></svg>
<div class="t" style="left:3191.4px;top:1198.26px;font-size:37.5px;line-height:37.5px;color:#ccccdc;letter-spacing:1.2px;-webkit-text-stroke:1.4px #ccccdc;">Filter</div>
<div class="a" style="left:2526px;top:1266px;width:369px;height:96px;background:#23242a;border-radius:6px;"></div>
<div class="t" style="left:2548.2px;top:1294.76px;font-size:37.5px;line-height:37.5px;color:#ccccdc;letter-spacing:0.7px;-webkit-text-stroke:1.4px #ccccdc;">@.serverRegion</div>
<div class="a" style="left:3003px;top:1293px;width:48px;height:48px;background:#23242a;box-shadow:inset 0 0 0 3px #2e2f38;border-radius:6px;"></div>
<div class="a" style="left:3168px;top:1266px;width:1158px;height:96px;background:#111217;box-shadow:inset 0 0 0 3px #2e2f38;border-radius:6px;"></div>
<div class="t" style="left:3195.5px;top:1291.41px;font-size:45px;line-height:45px;color:#ccccdc;letter-spacing:0.6px;-webkit-text-stroke:0.3px #ccccdc;transform:scaleX(0.89);transform-origin:0 0;">IGNORED</div>
<svg class="a" style="left:4251.00px;top:1292.70px" width="48" height="48" viewBox="0 0 24 24"><path fill="#91919d" d="M17,9.17a1,1,0,0,0-1.41,0L12,12.71,8.46,9.17a1,1,0,0,0-1.41,0,1,1,0,0,0,0,1.42l4.24,4.24a1,1,0,0,0,1.42,0L17,10.59A1,1,0,0,0,17,9.17Z"/></svg>
<svg class="a" style="left:4203.00px;top:1293.00px" width="48" height="48" viewBox="0 0 24 24"><path fill="#91919d" d="M13.41,12l4.3-4.29a1,1,0,1,0-1.42-1.42L12,10.59,7.71,6.29A1,1,0,0,0,6.29,7.71L10.59,12l-4.3,4.29a1,1,0,0,0,0,1.42,1,1,0,0,0,1.42,0L12,13.41l4.29,4.3a1,1,0,0,0,1.42,0,1,1,0,0,0,0-1.42Z"/></svg>
<div class="a" style="left:2526px;top:1362px;width:369px;height:96px;background:#23242a;border-radius:6px;"></div>
<div class="t" style="left:2548.2px;top:1390.76px;font-size:37.5px;line-height:37.5px;color:#ccccdc;letter-spacing:0.95px;-webkit-text-stroke:1.4px #ccccdc;">@.gameMode</div>
<div class="a" style="left:3003px;top:1389px;width:48px;height:48px;background:#23242a;box-shadow:inset 0 0 0 3px #2e2f38;border-radius:6px;"></div>
<div class="a" style="left:3168px;top:1362px;width:1158px;height:96px;background:#111217;box-shadow:inset 0 0 0 3px #2e2f38;border-radius:6px;"></div>
<div class="t" style="left:3195.5px;top:1387.41px;font-size:45px;line-height:45px;color:#ccccdc;letter-spacing:0.6px;-webkit-text-stroke:0.3px #ccccdc;transform:scaleX(0.89);transform-origin:0 0;">IGNORED</div>
<svg class="a" style="left:4251.00px;top:1388.70px" width="48" height="48" viewBox="0 0 24 24"><path fill="#91919d" d="M17,9.17a1,1,0,0,0-1.41,0L12,12.71,8.46,9.17a1,1,0,0,0-1.41,0,1,1,0,0,0,0,1.42l4.24,4.24a1,1,0,0,0,1.42,0L17,10.59A1,1,0,0,0,17,9.17Z"/></svg>
<svg class="a" style="left:4203.00px;top:1389.00px" width="48" height="48" viewBox="0 0 24 24"><path fill="#91919d" d="M13.41,12l4.3-4.29a1,1,0,1,0-1.42-1.42L12,10.59,7.71,6.29A1,1,0,0,0,6.29,7.71L10.59,12l-4.3,4.29a1,1,0,0,0,0,1.42,1,1,0,0,0,1.42,0L12,13.41l4.29,4.3a1,1,0,0,0,1.42,0,1,1,0,0,0,0-1.42Z"/></svg>
<div class="a" style="left:2526px;top:1458px;width:369px;height:96px;background:#23242a;border-radius:6px;"></div>
<div class="t" style="left:2548.2px;top:1486.76px;font-size:37.5px;line-height:37.5px;color:#ccccdc;letter-spacing:1.37px;-webkit-text-stroke:1.4px #ccccdc;">@.context</div>
<div class="a" style="left:3003px;top:1485px;width:48px;height:48px;background:#111217;box-shadow:inset 0 0 0 3px rgba(204,204,220,0.12);border-radius:6px;"></div>
<div class="a" style="left:3168px;top:1458px;width:1158px;height:96px;background:#111217;box-shadow:inset 0 0 0 3px #2e2f38;border-radius:6px;"></div>
<div class="t" style="left:3193px;top:1483.41px;font-size:45px;line-height:45px;color:#ccccdc;letter-spacing:-0.51px;-webkit-text-stroke:0.3px #ccccdc;">InGameOnly</div>
<svg class="a" style="left:4251.00px;top:1484.70px" width="48" height="48" viewBox="0 0 24 24"><path fill="#91919d" d="M17,9.17a1,1,0,0,0-1.41,0L12,12.71,8.46,9.17a1,1,0,0,0-1.41,0,1,1,0,0,0,0,1.42l4.24,4.24a1,1,0,0,0,1.42,0L17,10.59A1,1,0,0,0,17,9.17Z"/></svg>
<svg class="a" style="left:4203.00px;top:1485.00px" width="48" height="48" viewBox="0 0 24 24"><path fill="#91919d" d="M13.41,12l4.3-4.29a1,1,0,1,0-1.42-1.42L12,10.59,7.71,6.29A1,1,0,0,0,6.29,7.71L10.59,12l-4.3,4.29a1,1,0,0,0,0,1.42,1,1,0,0,0,1.42,0L12,13.41l4.29,4.3a1,1,0,0,0,1.42,0,1,1,0,0,0,0-1.42Z"/></svg>
<div class="a" style="left:2526px;top:1554px;width:369px;height:96px;background:#23242a;border-radius:6px;"></div>
<div class="t" style="left:2548.2px;top:1582.76px;font-size:37.5px;line-height:37.5px;color:#ccccdc;letter-spacing:1.25px;-webkit-text-stroke:1.4px #ccccdc;">@.device.platform</div>
<div class="a" style="left:3003px;top:1581px;width:48px;height:48px;background:#23242a;box-shadow:inset 0 0 0 3px #2e2f38;border-radius:6px;"></div>
<div class="a" style="left:3168px;top:1554px;width:1158px;height:96px;background:#111217;box-shadow:inset 0 0 0 3px #2e2f38;border-radius:6px;"></div>
<div class="t" style="left:3195.5px;top:1579.41px;font-size:45px;line-height:45px;color:#ccccdc;letter-spacing:0.6px;-webkit-text-stroke:0.3px #ccccdc;transform:scaleX(0.89);transform-origin:0 0;">IGNORED</div>
<svg class="a" style="left:4251.00px;top:1580.70px" width="48" height="48" viewBox="0 0 24 24"><path fill="#91919d" d="M17,9.17a1,1,0,0,0-1.41,0L12,12.71,8.46,9.17a1,1,0,0,0-1.41,0,1,1,0,0,0,0,1.42l4.24,4.24a1,1,0,0,0,1.42,0L17,10.59A1,1,0,0,0,17,9.17Z"/></svg>
<svg class="a" style="left:4203.00px;top:1581.00px" width="48" height="48" viewBox="0 0 24 24"><path fill="#91919d" d="M13.41,12l4.3-4.29a1,1,0,1,0-1.42-1.42L12,10.59,7.71,6.29A1,1,0,0,0,6.29,7.71L10.59,12l-4.3,4.29a1,1,0,0,0,0,1.42,1,1,0,0,0,1.42,0L12,13.41l4.29,4.3a1,1,0,0,0,1.42,0,1,1,0,0,0,0-1.42Z"/></svg>
<div class="a" style="left:0px;top:1884px;width:4326px;height:96px;background:#23242a;border-radius:6px;"></div>
<svg class="a" style="left:24.00px;top:1907.70px" width="48" height="48" viewBox="0 0 24 24"><path fill="#91919d" d="M17,9.17a1,1,0,0,0-1.41,0L12,12.71,8.46,9.17a1,1,0,0,0-1.41,0,1,1,0,0,0,0,1.42l4.24,4.24a1,1,0,0,0,1.42,0L17,10.59A1,1,0,0,0,17,9.17Z"/></svg>
<div class="t" style="left:120.5px;top:1910.95px;font-size:42px;line-height:42px;color:#6e9fff;letter-spacing:2.17px;-webkit-text-stroke:1.5px #6e9fff;">Perc</div>
<div class="t" style="left:341.8px;top:1907.69px;font-size:39px;line-height:39px;color:#91919d;font-style:italic;letter-spacing:-0.27px;-webkit-text-stroke:0.4px #91919d;">(Expression)</div>
<svg class="a" style="left:4008.00px;top:1908.00px" width="48" height="48" viewBox="0 0 24 24"><path fill="#91919d" d="M21,8.94a1.31,1.31,0,0,0-.06-.27l0-.09a1.07,1.07,0,0,0-.19-.28h0l-6-6h0a1.07,1.07,0,0,0-.28-.19.32.32,0,0,0-.09,0A.88.88,0,0,0,14.05,2H10A3,3,0,0,0,7,5V6H6A3,3,0,0,0,3,9V19a3,3,0,0,0,3,3h8a3,3,0,0,0,3-3V18h1a3,3,0,0,0,3-3V9S21,9,21,8.94ZM15,5.41,17.59,8H16a1,1,0,0,1-1-1ZM15,19a1,1,0,0,1-1,1H6a1,1,0,0,1-1-1V9A1,1,0,0,1,6,8H7v7a3,3,0,0,0,3,3h5Zm4-4a1,1,0,0,1-1,1H10a1,1,0,0,1-1-1V5a1,1,0,0,1,1-1h3V7a3,3,0,0,0,3,3h3Z"/></svg>
<svg class="a" style="left:4092.00px;top:1908.00px" width="48" height="48" viewBox="0 0 24 24"><path fill="#91919d" d="M21.92,11.6C19.9,6.91,16.1,4,12,4S4.1,6.91,2.08,11.6a1,1,0,0,0,0,.8C4.1,17.09,7.9,20,12,20s7.9-2.91,9.92-7.6A1,1,0,0,0,21.92,11.6ZM12,18c-3.17,0-6.17-2.29-7.9-6C5.830,8.29,8.83,6,12,6s6.17,2.29,7.9,6C18.17,15.71,15.17,18,12,18ZM12,8a4,4,0,1,0,4,4A4,4,0,0,0,12,8Zm0,6a2,2,0,1,1,2-2A2,2,0,0,1,12,14Z"/></svg>
<svg class="a" style="left:4176.00px;top:1908.00px" width="48" height="48" viewBox="0 0 24 24"><path fill="#91919d" d="M10,18a1,1,0,0,0,1-1V11a1,1,0,0,0-2,0v6A1,1,0,0,0,10,18ZM20,6H16V5a3,3,0,0,0-3-3H11A3,3,0,0,0,8,5V6H4A1,1,0,0,0,4,8H5V19a3,3,0,0,0,3,3h8a3,3,0,0,0,3-3V8h1a1,1,0,0,0,0-2ZM10,5a1,1,0,0,1,1-1h2a1,1,0,0,1,1,1V6H10Zm7,14a1,1,0,0,1-1,1H8a1,1,0,0,1-1-1V8H17Zm-3-1a1,1,0,0,0,1-1V11a1,1,0,0,0-2,0v6A1,1,0,0,0,14,18Z"/></svg>
<div class="a" style="left:4262.7px;top:1912.2px;width:8.6px;height:8.6px;border-radius:50%;background:#91919d"></div>
<div class="a" style="left:4262.7px;top:1927.7px;width:8.6px;height:8.6px;border-radius:50%;background:#91919d"></div>
<div class="a" style="left:4262.7px;top:1943.2px;width:8.6px;height:8.6px;border-radius:50%;background:#91919d"></div>
<div class="a" style="left:4278.7px;top:1912.2px;width:8.6px;height:8.6px;border-radius:50%;background:#91919d"></div>
<div class="a" style="left:4278.7px;top:1927.7px;width:8.6px;height:8.6px;border-radius:50%;background:#91919d"></div>
<div class="a" style="left:4278.7px;top:1943.2px;width:8.6px;height:8.6px;border-radius:50%;background:#91919d"></div>
<div class="a" style="left:72px;top:1992px;width:336px;height:96px;background:#23242a;border-radius:6px;"></div>
<div class="t" style="left:96px;top:2020.76px;font-size:37.5px;line-height:37.5px;color:#ccccdc;letter-spacing:1.24px;-webkit-text-stroke:1.4px #ccccdc;">Operation</div>
<div class="a" style="left:420px;top:1992px;width:600px;height:96px;background:#111217;box-shadow:inset 0 0 0 3px #2e2f38;border-radius:6px;"></div>
<div class="t" style="left:445.0px;top:2018.21px;font-size:45px;line-height:45px;color:#ccccdc;letter-spacing:1.93px;-webkit-text-stroke:0.3px #ccccdc;">Math</div>
<svg class="a" style="left:945.00px;top:2018.70px" width="48" height="48" viewBox="0 0 24 24"><path fill="#91919d" d="M17,9.17a1,1,0,0,0-1.41,0L12,12.71,8.46,9.17a1,1,0,0,0-1.41,0,1,1,0,0,0,0,1.42l4.24,4.24a1,1,0,0,0,1.42,0L17,10.59A1,1,0,0,0,17,9.17Z"/></svg>
<div class="a" style="left:72px;top:2100px;width:300px;height:96px;background:#23242a;border-radius:6px;"></div>
<div class="t" style="left:95px;top:2128.76px;font-size:37.5px;line-height:37.5px;color:#ccccdc;letter-spacing:0.94px;-webkit-text-stroke:1.4px #ccccdc;">Expression</div>
<svg class="a" style="left:300.00px;top:2127.00px" width="48" height="48" viewBox="0 0 24 24"><path fill="#ccccdc" d="M12,2A10,10,0,1,0,22,12,10,10,0,0,0,12,2Zm0,18a8,8,0,1,1,8-8A8,8,0,0,1,12,20Zm0-8.5a1,1,0,0,0-1,1v3a1,1,0,0,0,2,0v-3A1,1,0,0,0,12,11.5Zm0-4a1.25,1.25,0,1,0,1.25,1.25A1.25,1.25,0,0,0,12,7.5Z"/></svg>
<div class="a" style="left:384px;top:2100px;width:3930px;height:96px;background:#111217;box-shadow:inset 0 0 0 3px #2e2f38;border-radius:6px;"></div>
<div class="t" style="left:412px;top:2126.51px;font-size:45px;line-height:45px;color:#ccccdc;letter-spacing:0.1px;-webkit-text-stroke:0.3px #ccccdc;">$A/$B</div>
<svg class="a" style="left:4284px;top:2166px" width="28" height="28" viewBox="0 0 28 28"><path d="M6 24 L24 6 M18 24 L24 18" stroke="#000" stroke-width="6" stroke-linecap="butt"/><path d="M6 24 L24 6 M18 24 L24 18" stroke="#b4b4b4" stroke-width="3"/></svg>
</body></html>
